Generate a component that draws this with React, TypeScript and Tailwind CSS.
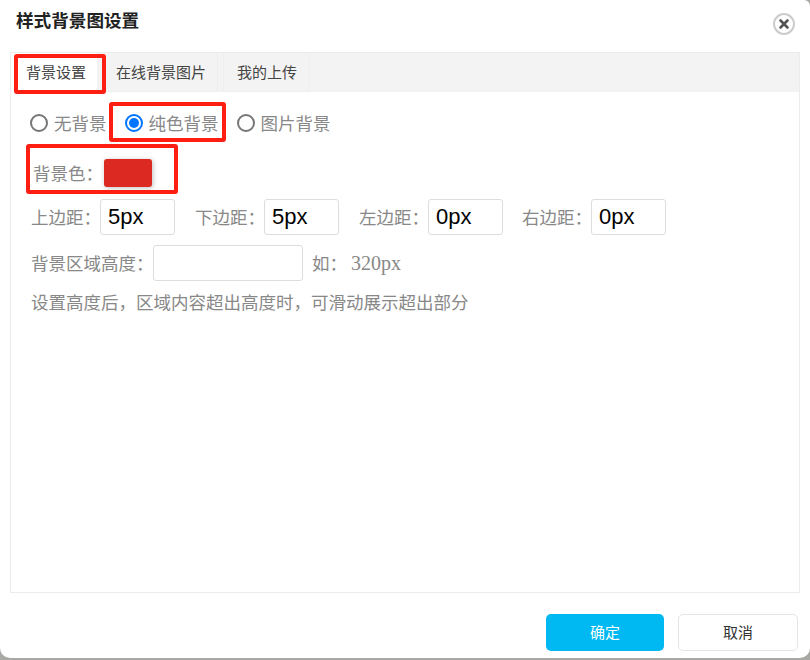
const FONT = 'font-["Liberation_Serif","Noto_Sans_CJK_SC",serif]';

const MARGINS = [
  { label: '上边距：', value: '5px', cls: 'ml-[20px]' },
  { label: '下边距：', value: '5px', cls: 'ml-[20px]' },
  { label: '左边距：', value: '0px', cls: 'ml-[20px]' },
  { label: '右边距：', value: '0px', cls: 'ml-[19px]' },
];

function Radio({ checked, label, className }: { checked?: boolean; label: string; className: string }) {
  return (
    <label className={`flex items-center ${className}`}>
      <span
        className={`flex h-[18px] w-[18px] items-center justify-center rounded-full border-2 bg-white ${
          checked ? 'border-[#0075ff]' : 'border-[#767676]'
        }`}
      >
        {checked && <span className="h-[10px] w-[10px] rounded-full bg-[#0075ff]" />}
      </span>
      <span className="ml-[6px] pt-[2px] text-[17.5px] leading-[24px] text-[#888]">{label}</span>
    </label>
  );
}

export default function App() {
  return (
    <div className={`h-[660px] w-[810px] overflow-hidden bg-[#a8a8a4] ${FONT}`}>
      <div className="relative flex h-[658px] w-[810px] flex-col rounded-b-[10px] rounded-tr-[6px] bg-white">
        {/* Header */}
        <div className="flex h-[52px] shrink-0 items-start justify-between">
          <h1 className='ml-[16px] mt-[7px] font-["Noto_Sans_CJK_SC",sans-serif] text-[17.6px] font-bold leading-[26px] text-[#222]'>
            样式背景图设置
          </h1>
          <button className="mr-[15px] mt-[13px] flex h-[22px] w-[22px] items-center justify-center rounded-full border-2 border-[#ccc] bg-white">
            <svg viewBox="0 0 12 12" className="h-[12px] w-[12px]" aria-hidden="true">
              <path d="M2.5 2.5l7 7M9.5 2.5l-7 7" stroke="#555" strokeWidth="2.6" strokeLinecap="round" />
            </svg>
          </button>
        </div>

        {/* Tab panel */}
        <div className="mx-[10px] flex h-[541px] flex-col border border-[#ececec]">
          <div className="flex h-[39px] shrink-0 bg-[#f3f3f3] text-[15px] leading-[41px] text-[#444]">
            <div className="w-[86px] bg-white pl-[15px]">背景设置</div>
            <div className="ml-[7px] w-[114px] border-x border-b border-[#eee] pl-[11px]">在线背景图片</div>
            <div className="ml-[5px] w-[87px] border-x border-b border-[#eee] pl-[13px]">我的上传</div>
          </div>

          <div className="flex flex-col">
            <div className="mt-[19px] flex h-[24px] items-center">
              <Radio label="无背景" className="ml-[19px]" />
              <Radio checked label="纯色背景" className="ml-[18px]" />
              <Radio label="图片背景" className="ml-[18px]" />
            </div>

            <div className="mt-[23px] flex h-[30px] items-center">
              <span className="ml-[22px] w-[69px] whitespace-nowrap pt-[2px] text-[17.5px] text-[#888]">背景色：</span>
              <span className="ml-[2px] mb-[1px] h-[28px] w-[48px] rounded-[3px] bg-[#dc2a22] shadow-[1px_1px_5px_rgba(0,0,0,0.25)]" />
            </div>

            <div className="mt-[11px] flex h-[36px] items-center">
              {MARGINS.map((m) => (
                <div key={m.label} className={`flex items-center ${m.cls}`}>
                  <span className="w-[69px] whitespace-nowrap pt-[2px] text-[17.5px] text-[#888]">{m.label}</span>
                  <input
                    readOnly
                    value={m.value}
                    className='h-[36px] w-[75px] rounded-[3px] border border-[#ddd] bg-white px-[7px] font-["Liberation_Sans",sans-serif] text-[22px] text-black outline-none'
                  />
                </div>
              ))}
            </div>

            <div className="mt-[10px] flex h-[36px] items-center">
              <span className="ml-[20px] w-[122px] whitespace-nowrap pt-[2px] text-[17.5px] text-[#888]">背景区域高度：</span>
              <input readOnly className="h-[36px] w-[150px] rounded-[3px] border border-[#ddd] bg-white outline-none" />
              <span className="ml-[9px] w-[39px] whitespace-nowrap pt-[2px] text-[17.5px] text-[#888]">如：</span>
              <span className="text-[20px] text-[#888]">320px</span>
            </div>

            <p className="ml-[20px] mt-[10px] text-[17.5px] leading-[24px] text-[#888]">
              设置高度后，区域内容超出高度时，可滑动展示超出部分
            </p>
          </div>
        </div>

        {/* Footer */}
        <div className='mt-[21px] flex justify-end gap-[14px] pr-[12px] font-["Noto_Sans_CJK_SC",sans-serif] text-[15px]'>
          <button className="h-[37px] w-[118px] rounded-[5px] bg-[#00b9f2] text-white">确定</button>
          <button className="h-[37px] w-[120px] rounded-[5px] border border-[#e5e5e5] bg-white text-[#333]">取消</button>
        </div>

        {/* Red annotation boxes */}
        <div className="absolute left-[14px] top-[54px] h-[40px] w-[92px] rounded-[3px] border-[4px] border-[#ff1e12]" />
        <div className="absolute left-[109px] top-[102px] h-[40px] w-[117px] rounded-[3px] border-[4px] border-[#ff1e12]" />
        <div className="absolute left-[26px] top-[144px] h-[50px] w-[152px] rounded-[3px] border-[4px] border-[#ff1e12]" />
      </div>
    </div>
  );
}
